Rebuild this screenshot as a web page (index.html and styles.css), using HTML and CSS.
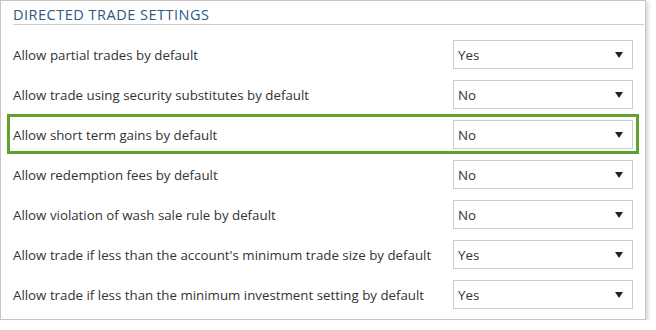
FILE: index.html
```html
<!DOCTYPE html>
<html lang="en">
<head>
    <meta charset="UTF-8">
    <title>Directed Trade Settings</title>
    <link rel="stylesheet" href="styles.css">
</head>
<body>
    <div class="panel">
        <h2 class="panel-title">DIRECTED TRADE SETTINGS</h2>

        <div class="setting-row">
            <span class="setting-label">Allow partial trades by default</span>
            <div class="dropdown"><span>Yes</span><svg class="caret" width="8" height="6" viewBox="0 0 8 6"><path d="M0 0h8L4 6z"/></svg></div>
        </div>
        <div class="setting-row">
            <span class="setting-label">Allow trade using security substitutes by default</span>
            <div class="dropdown"><span>No</span><svg class="caret" width="8" height="6" viewBox="0 0 8 6"><path d="M0 0h8L4 6z"/></svg></div>
        </div>
        <div class="setting-row highlighted">
            <span class="setting-label">Allow short term gains by default</span>
            <div class="dropdown"><span>No</span><svg class="caret" width="8" height="6" viewBox="0 0 8 6"><path d="M0 0h8L4 6z"/></svg></div>
        </div>
        <div class="setting-row">
            <span class="setting-label">Allow redemption fees by default</span>
            <div class="dropdown"><span>No</span><svg class="caret" width="8" height="6" viewBox="0 0 8 6"><path d="M0 0h8L4 6z"/></svg></div>
        </div>
        <div class="setting-row">
            <span class="setting-label">Allow violation of wash sale rule by default</span>
            <div class="dropdown"><span>No</span><svg class="caret" width="8" height="6" viewBox="0 0 8 6"><path d="M0 0h8L4 6z"/></svg></div>
        </div>
        <div class="setting-row">
            <span class="setting-label">Allow trade if less than the account's minimum trade size by default</span>
            <div class="dropdown"><span>Yes</span><svg class="caret" width="8" height="6" viewBox="0 0 8 6"><path d="M0 0h8L4 6z"/></svg></div>
        </div>
        <div class="setting-row">
            <span class="setting-label">Allow trade if less than the minimum investment setting by default</span>
            <div class="dropdown"><span>Yes</span><svg class="caret" width="8" height="6" viewBox="0 0 8 6"><path d="M0 0h8L4 6z"/></svg></div>
        </div>
    </div>
</body>
</html>
```

FILE: styles.css
```css
body {
    margin: 0;
    background: #fff;
    font-family: "Open Sans", "Noto Sans", Arial, sans-serif;
    color: #333;
}
.panel {
    width: 646px;
    box-sizing: border-box;
    border: 1px solid #c6c6c6;
    box-shadow: 2px 2px 4px rgba(0, 0, 0, 0.18);
    padding-bottom: 5px;
    background: #fff;
}
.panel-title {
    margin: 0 1px 9px 12px;
    padding-top: 5px;
    font-size: 14.5px;
    letter-spacing: 0.5px;
    line-height: 18px;
    font-weight: normal;
    color: #2a5a86;
    border-bottom: 1px solid #cfcfcf;
}
.setting-row {
    display: flex;
    align-items: center;
    justify-content: space-between;
    height: 40px;
    box-sizing: border-box;
    margin: 0 6px 0 6px;
    padding: 3px 3px 2px 3px;
    border: 3px solid transparent;
}
.setting-row.highlighted {
    border-color: #62a12e;
}
.setting-label {
    font-size: 13.3px;
}
.dropdown {
    display: flex;
    align-items: center;
    justify-content: space-between;
    width: 180px;
    height: 29px;
    box-sizing: border-box;
    border: 1px solid #cccccc;
    padding: 0 9px 0 4px;
    font-size: 13.3px;
}
.caret {
    fill: #222;
}
```
